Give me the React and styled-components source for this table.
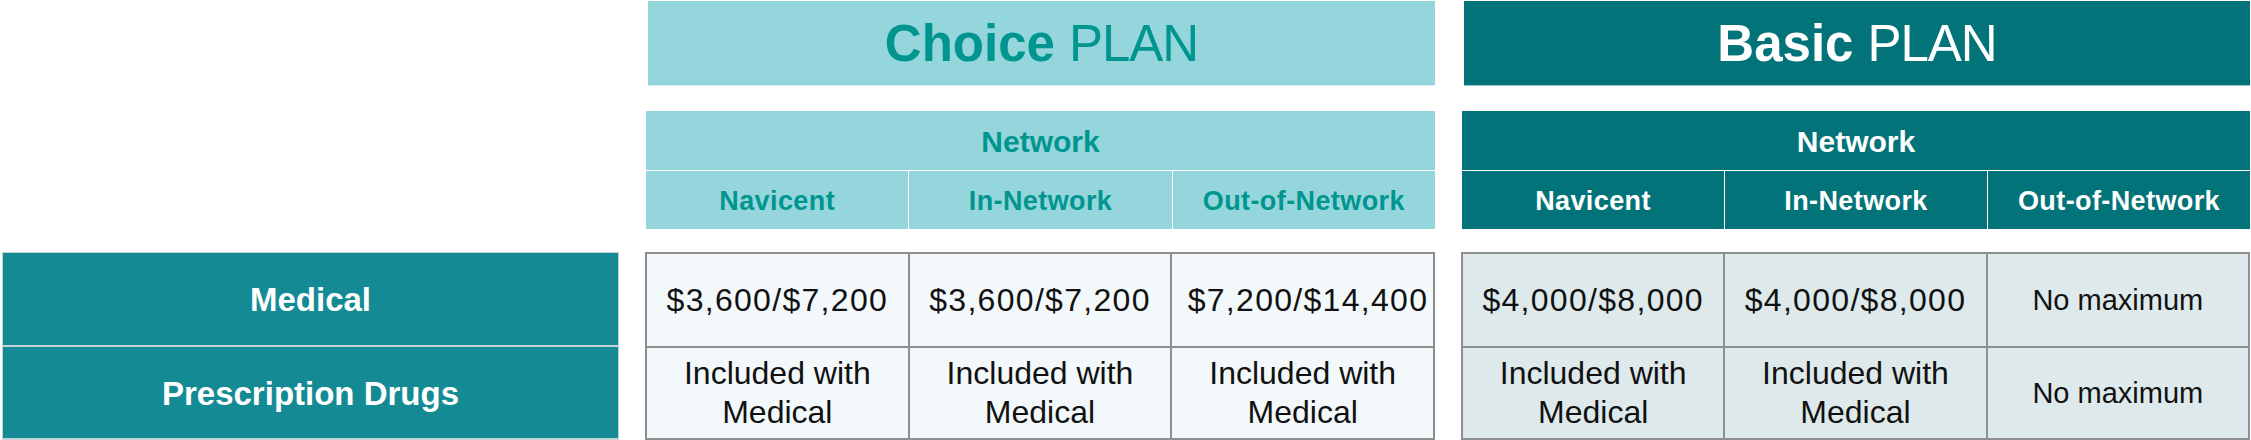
import styled, { createGlobalStyle } from 'styled-components';

const GlobalStyle = createGlobalStyle`
  body {
    margin: 0;
    background: #ffffff;
    font-family: "Liberation Sans", Arial, sans-serif;
  }
`;

const plans = [
  {
    key: 'choice',
    name: 'Choice',
    medical: ['$3,600/$7,200', '$3,600/$7,200', '$7,200/$14,400'],
    drugs: ['Included with Medical', 'Included with Medical', 'Included with Medical'],
  },
  {
    key: 'basic',
    name: 'Basic',
    medical: ['$4,000/$8,000', '$4,000/$8,000', 'No maximum'],
    drugs: ['Included with Medical', 'Included with Medical', 'No maximum'],
  },
];

const palette = {
  choice: { head: '#95d6dc', text: '#00968f', cell: '#f3f8fb', line: 'rgba(255,255,255,0.7)' },
  basic: { head: '#027378', text: '#ffffff', cell: '#dde9ea', line: 'rgba(255,255,255,0.55)' },
};

const Page = styled.div`
  padding: 1px 0 0 2px;
  width: 2249px;
`;

// every band shares the same three columns: labels, Choice, Basic
const Band = styled.div`
  display: grid;
  grid-template-columns: 617px 790px 789px;
  column-gap: 26px;
  margin-bottom: ${({ $gap }) => $gap || 0}px;
`;

const Spacer = styled.div``;

const PlanTitle = styled.div`
  height: 84px;
  display: flex;
  align-items: center;
  justify-content: center;
  gap: 14px;
  background: ${({ $plan }) => palette[$plan].head};
  color: ${({ $plan }) => palette[$plan].text};
  font-size: 51px;
  margin-left: 3px;
  border-bottom: 1px solid rgba(255, 255, 255, 0.6);

  b {
    font-weight: 700;
  }
  span {
    font-weight: 400;
    letter-spacing: -1px;
  }
`;

const NetworkHead = styled.div`
  display: grid;
  grid-template-columns: repeat(3, minmax(0, 1fr));
  grid-template-rows: 59px 58px;
  gap: 1px;
  background: ${({ $plan }) => palette[$plan].line};
  margin-left: 1px;
  color: ${({ $plan }) => palette[$plan].text};
  font-weight: 700;
`;

const NetworkTitle = styled.div`
  grid-column: 1 / -1;
  display: flex;
  align-items: center;
  justify-content: center;
  background: ${({ $plan }) => palette[$plan].head};
  font-size: 30px;
  padding-top: 2px;
`;

const SubHead = styled.div`
  display: flex;
  align-items: center;
  justify-content: center;
  background: ${({ $plan }) => palette[$plan].head};
  font-size: 27px;
  letter-spacing: 0.4px;
  padding-top: 2px;
`;

const Labels = styled.div`
  display: grid;
  grid-template-rows: 92px 91px;
  gap: 2px;
  background: #c3d1d4;
  border: 1px solid #c3d1d4;
`;

const Label = styled.div`
  display: flex;
  align-items: center;
  justify-content: center;
  background: #148b94;
  color: #ffffff;
  font-size: 33px;
  font-weight: 700;
  padding-top: 2px;
`;

const Table = styled.div`
  display: grid;
  grid-template-columns: repeat(3, minmax(0, 1fr));
  grid-template-rows: 92px 90px;
  gap: 2px;
  background: #8d8f90;
  border: 2px solid #8d8f90;
`;

const Cell = styled.div`
  display: flex;
  align-items: center;
  justify-content: center;
  text-align: center;
  background: ${({ $plan }) => palette[$plan].cell};
  color: #111111;
  font-size: ${({ $small }) => ($small ? 29 : 32)}px;
  letter-spacing: ${({ $amount }) => ($amount ? 1.3 : 0)}px;
  line-height: 39px;
  padding: 0 4px;
  white-space: ${({ $amount }) => ($amount ? 'nowrap' : 'normal')};
`;

const Wrap = styled.span`
  max-width: 230px;
`;

export default function App() {
  return (
    <>
      <GlobalStyle />
      <Page>
        <Band $gap={25}>
          <Spacer />
          {plans.map((p) => (
            <PlanTitle key={p.key} $plan={p.key}>
              <b>{p.name}</b>
              <span>PLAN</span>
            </PlanTitle>
          ))}
        </Band>

        <Band $gap={23}>
          <Spacer />
          {plans.map((p) => (
            <NetworkHead key={p.key} $plan={p.key}>
              <NetworkTitle $plan={p.key}>Network</NetworkTitle>
              <SubHead $plan={p.key}>Navicent</SubHead>
              <SubHead $plan={p.key}>In-Network</SubHead>
              <SubHead $plan={p.key}>Out-of-Network</SubHead>
            </NetworkHead>
          ))}
        </Band>

        <Band>
          <Labels>
            <Label>Medical</Label>
            <Label>Prescription Drugs</Label>
          </Labels>
          {plans.map((p) => (
            <Table key={p.key}>
              {[...p.medical, ...p.drugs].map((v, i) => (
                <Cell
                  key={i}
                  $plan={p.key}
                  $small={v === 'No maximum'}
                  $amount={v.startsWith('$')}
                >
                  <Wrap>{v}</Wrap>
                </Cell>
              ))}
            </Table>
          ))}
        </Band>
      </Page>
    </>
  );
}
